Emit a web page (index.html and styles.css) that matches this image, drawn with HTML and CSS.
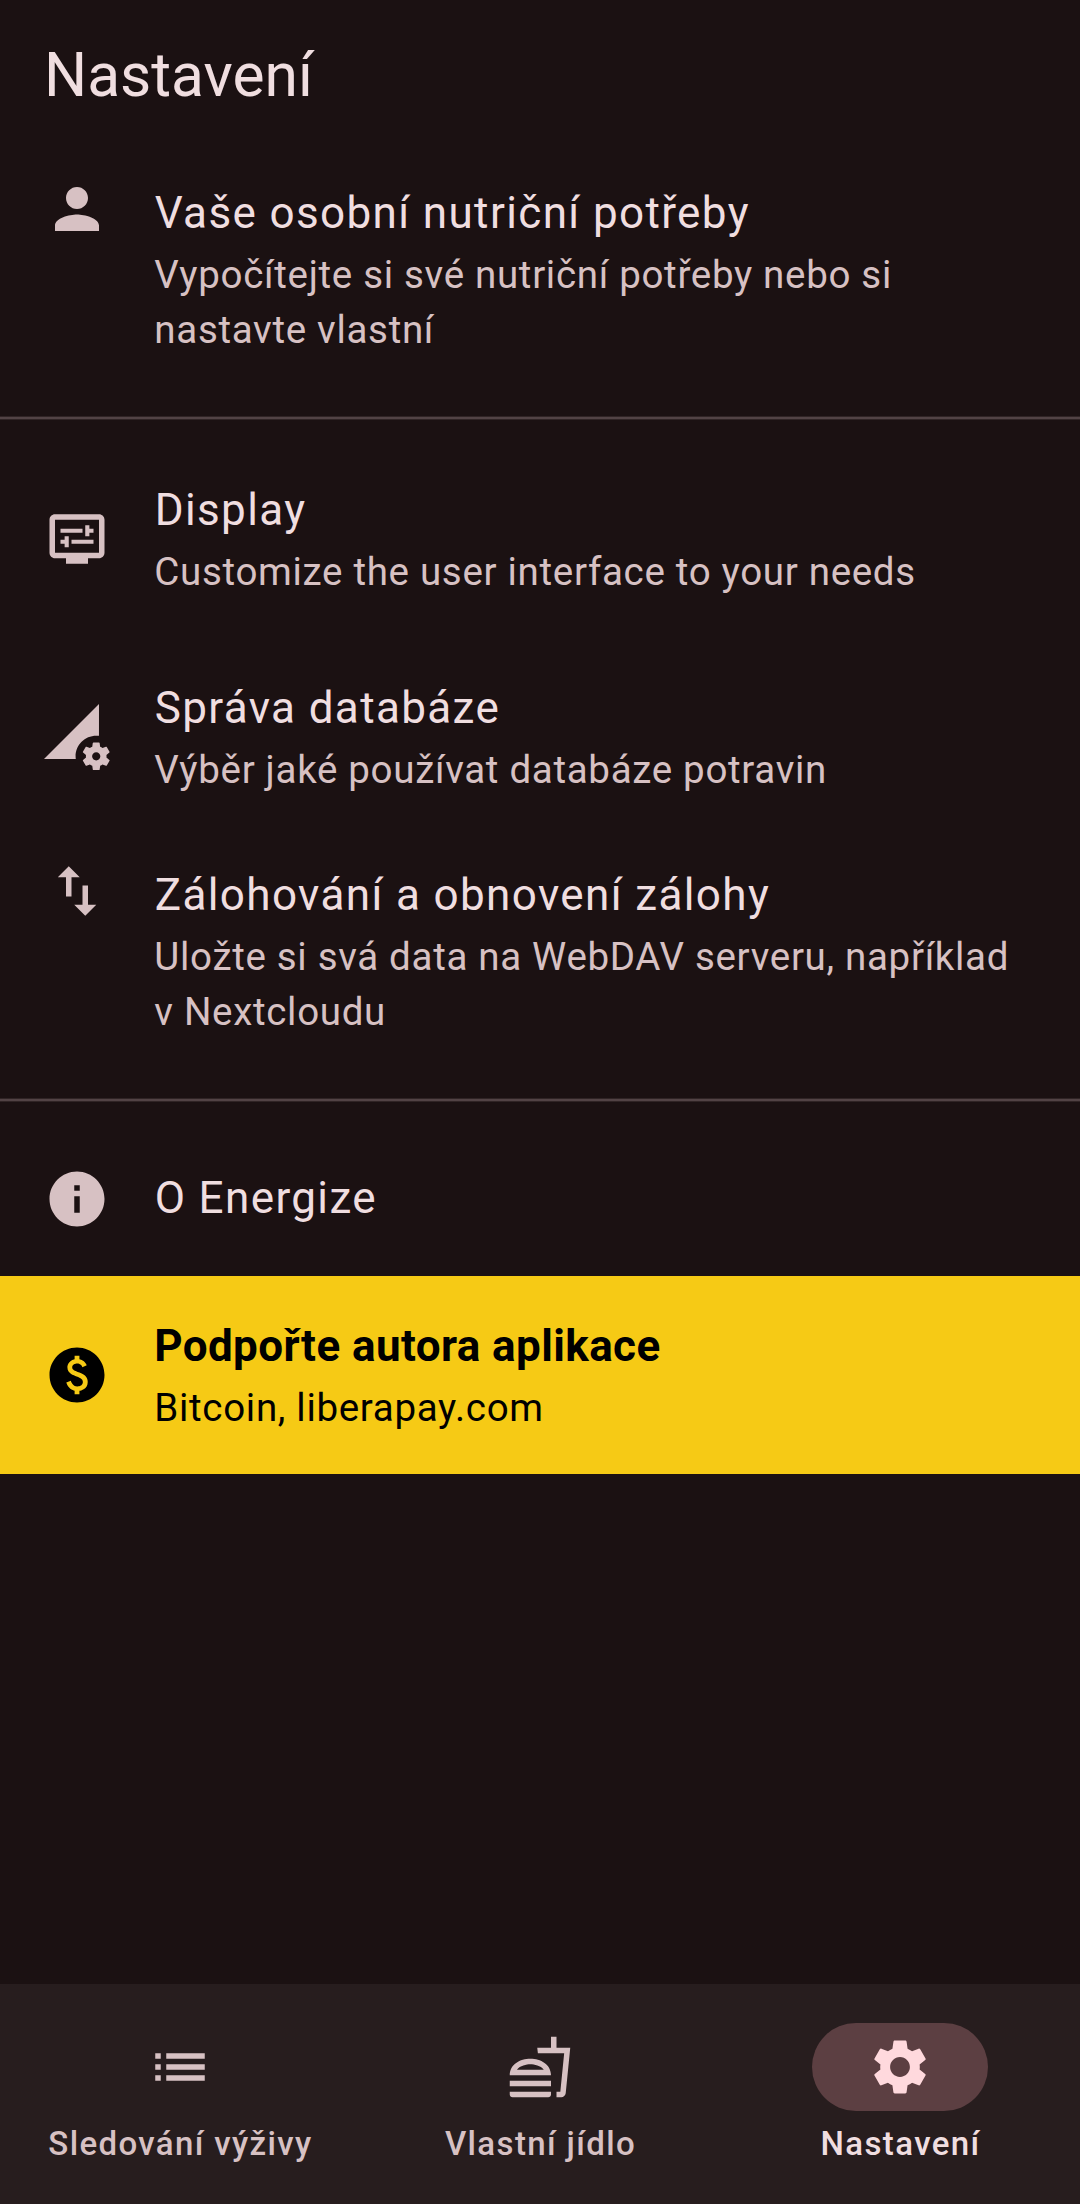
FILE: index.html
```html
<!DOCTYPE html>
<html lang="cs">
<head>
<meta charset="utf-8">
<title>Nastavení</title>
<link rel="stylesheet" href="styles.css">
</head>
<body>
<div class="app">
  <header class="app-bar"><h1>Nastavení</h1></header>
  <main class="settings">
    <div class="tile tile-tall">
      <svg class="icon" viewBox="0 0 24 24"><path d="M12 12c2.21 0 4-1.79 4-4s-1.79-4-4-4-4 1.79-4 4 1.79 4 4 4zm0 2c-2.67 0-8 1.34-8 4v2h16v-2c0-2.66-5.33-4-8-4z"/></svg>
      <div class="tile-text">
        <div class="tile-title">Vaše osobní nutriční potřeby</div>
        <div class="tile-subtitle">Vypočítejte si své nutriční potřeby nebo si nastavte vlastní</div>
      </div>
    </div>
    <div class="divider"></div>
    <div class="tile">
      <svg class="icon" viewBox="0 0 24 24"><path d="M20 3H4c-1.1 0-2 .9-2 2v12c0 1.1.9 2 2 2h4v2h8v-2h4c1.1 0 2-.9 2-2V5c0-1.1-.9-2-2-2zm0 14H4V5h16v12z"/><path d="M6 8.25h8v1.5H6zM16.5 9.75H18v-1.5h-1.5V7H15v4h1.5zM10 12.25h8v1.5h-8zM7.5 15H9v-4H7.5v1.25H6v1.5h1.5z"/></svg>
      <div class="tile-text">
        <div class="tile-title">Display</div>
        <div class="tile-subtitle">Customize the user interface to your needs</div>
      </div>
    </div>
    <div class="tile">
      <svg class="icon" viewBox="0 0 24 24"><path d="M18.99 11.5c.34 0 .67.03 1 .07L20 0 0 20h11.56c-.04-.33-.07-.66-.07-1 0-4.14 3.36-7.5 7.5-7.5zm3.71 7.99c.02-.16.04-.32.04-.49 0-.17-.01-.33-.04-.49l1.06-.83c.09-.08.12-.21.06-.32l-1-1.73c-.06-.11-.19-.15-.31-.11l-1.24.5c-.26-.2-.54-.37-.85-.49l-.19-1.32c-.01-.12-.12-.21-.24-.21h-2c-.12 0-.23.09-.25.21l-.19 1.32c-.3.13-.59.29-.85.49l-1.24-.5c-.11-.04-.24 0-.31.11l-1 1.73c-.06.11-.04.24.06.32l1.06.83c-.02.16-.03.32-.03.49 0 .17.01.33.03.49l-1.06.83c-.09.08-.12.21-.06.32l1 1.73c.06.11.19.15.31.11l1.24-.5c.26.2.54.37.85.49l.19 1.32c.02.12.12.21.25.21h2c.12 0 .23-.09.25-.21l.19-1.32c.3-.13.59-.29.84-.49l1.25.5c.11.04.24 0 .31-.11l1-1.73c.06-.11.03-.24-.06-.32l-1.07-.83zm-3.71 1.01c-.83 0-1.5-.67-1.5-1.5s.67-1.5 1.5-1.5 1.5.67 1.5 1.5-.67 1.5-1.5 1.5z"/></svg>
      <div class="tile-text">
        <div class="tile-title">Správa databáze</div>
        <div class="tile-subtitle">Výběr jaké používat databáze potravin</div>
      </div>
    </div>
    <div class="tile tile-tall">
      <svg class="icon" viewBox="0 0 24 24"><path d="M16 17.01V10h-2v7.01h-3L15 21l4-3.99h-3zM9 3L5 6.99h3V14h2V6.99h3L9 3z"/></svg>
      <div class="tile-text">
        <div class="tile-title">Zálohování a obnovení zálohy</div>
        <div class="tile-subtitle">Uložte si svá data na WebDAV serveru, například v&nbsp;Nextcloudu</div>
      </div>
    </div>
    <div class="divider"></div>
    <div class="tile tile-short">
      <svg class="icon" viewBox="0 0 24 24"><path d="M12 2C6.48 2 2 6.48 2 12s4.48 10 10 10 10-4.48 10-10S17.52 2 12 2zm1 15h-2v-6h2v6zm0-8h-2V7h2v2z"/></svg>
      <div class="tile-text">
        <div class="tile-title">O Energize</div>
      </div>
    </div>
    <div class="tile tile-support">
      <svg class="icon" viewBox="0 0 24 24"><path d="M12 2C6.48 2 2 6.48 2 12s4.48 10 10 10 10-4.48 10-10S17.52 2 12 2zm.88 15.76V19h-1.75v-1.29c-.74-.18-2.39-.77-3.02-2.96l1.65-.67c.06.22.58 2.09 2.4 2.09.93 0 1.98-.48 1.98-1.61 0-.96-.7-1.46-2.28-2.03-1.1-.39-3.35-1.03-3.35-3.31 0-.1.01-2.4 2.62-2.96V5h1.75v1.24c1.84.32 2.51 1.79 2.66 2.23l-1.58.67c-.11-.35-.59-1.34-1.9-1.34-.7 0-1.81.37-1.81 1.39 0 .95.86 1.31 2.64 1.9 2.4.83 3.01 2.05 3.01 3.45 0 2.63-2.5 3.13-3.02 3.22z"/></svg>
      <div class="tile-text">
        <div class="tile-title">Podpořte autora aplikace</div>
        <div class="tile-subtitle">Bitcoin, liberapay.com</div>
      </div>
    </div>
  </main>
  <nav class="nav-bar">
    <div class="nav-item">
      <div class="indicator"><svg class="icon" viewBox="0 0 24 24"><path d="M3 13h2v-2H3v2zm0 4h2v-2H3v2zm0-8h2V7H3v2zm4 4h14v-2H7v2zm0 4h14v-2H7v2zM7 7v2h14V7H7z"/></svg></div>
      <span>Sledování výživy</span>
    </div>
    <div class="nav-item">
      <div class="indicator"><svg class="icon" viewBox="0 0 24 24"><path d="M1 21.98c0 .56.45 1.01 1.01 1.01H15c.56 0 1.01-.45 1.01-1.01V21H1v.98zM8.5 8.99C4.75 8.99 1 11 1 15h15c0-4-3.75-6.01-7.5-6.01zM3.62 13c1.11-1.55 3.47-2.01 4.88-2.01s3.77.46 4.88 2.01H3.62zM1 17h15v2H1zM18 5V1h-2v4h-5l.23 2h9.56l-1.4 14H18v2h1.72c.84 0 1.53-.65 1.63-1.47L23 5h-5z"/></svg></div>
      <span>Vlastní jídlo</span>
    </div>
    <div class="nav-item nav-item-active">
      <div class="indicator"><svg class="icon" viewBox="0 0 24 24"><path d="M19.14 12.94c.04-.3.06-.61.06-.94 0-.32-.02-.64-.07-.94l2.03-1.58c.18-.14.23-.41.12-.61l-1.92-3.32c-.12-.22-.37-.29-.59-.22l-2.39.96c-.5-.38-1.03-.7-1.62-.94l-.36-2.54c-.04-.24-.24-.41-.48-.41h-3.84c-.24 0-.43.17-.47.41l-.36 2.54c-.59.24-1.13.57-1.62.94l-2.39-.96c-.22-.08-.47 0-.59.22L2.74 8.87c-.12.21-.08.47.12.61l2.03 1.58c-.05.3-.09.63-.09.94s.02.64.07.94l-2.03 1.58c-.18.14-.23.41-.12.61l1.92 3.32c.12.22.37.29.59.22l2.39-.96c.5.38 1.03.7 1.62.94l.36 2.54c.05.24.24.41.48.41h3.84c.24 0 .44-.17.47-.41l.36-2.54c.59-.24 1.13-.56 1.62-.94l2.39.96c.22.08.47 0 .59-.22l1.92-3.32c.12-.22.07-.47-.12-.61l-2.01-1.58zM12 15.6c-1.98 0-3.6-1.62-3.6-3.6s1.62-3.6 3.6-3.6 3.6 1.62 3.6 3.6-1.62 3.6-3.6 3.6z"/></svg></div>
      <span>Nastavení</span>
    </div>
  </nav>
</div>
</body>
</html>
```
FILE: styles.css
```css
*,
*::before {
  box-sizing: border-box;
}

body {
  margin: 0;
  background: #1b1112;
  color: #f0dee0;
  font-family: Roboto, sans-serif;
}

.app {
  display: flex;
  flex-direction: column;
  height: 2204px;
}

.app-bar {
  display: flex;
  align-items: center;
  height: 154px;
  padding: 0 44px 2px;
}

.app-bar h1 {
  margin: 0;
  font-size: 60.5px;
  font-weight: 400;
  line-height: 76px;
}

.settings {
  flex: 1;
}

.tile {
  display: flex;
  align-items: center;
  gap: 44px;
  height: 198px;
  padding: 0 66px 3px 44px;
}

.tile > .icon {
  margin-top: 3px;
}

.tile-tall {
  align-items: flex-start;
  height: 242px;
  padding-top: 22px;
}

.tile-tall > .icon {
  margin-top: 0;
}

.tile-tall .tile-text {
  padding-top: 4px;
}

.tile-short {
  height: 154px;
}

.icon {
  flex: none;
  width: 66px;
  height: 66px;
  fill: #d7c1c3;
}

.tile-text {
  flex: 1;
}

.tile-title {
  padding-left: 0.7px;
  font-size: 44px;
  line-height: 66px;
  letter-spacing: 1.375px;
}

.tile-subtitle {
  padding: 1px 0 0 0.35px;
  color: #d7c1c3;
  font-size: 38.5px;
  line-height: 55px;
  letter-spacing: 0.6875px;
}

.divider {
  display: flex;
  align-items: center;
  height: 44px;
}

.divider::before {
  content: "";
  flex: 1;
  height: 4px;
  border: solid #302425;
  border-width: 1px 0;
  background: #524345;
}

.tile-support {
  background: #f6ca15;
  color: #000;
}

.tile-support .tile-title {
  padding-left: 0.2px;
  font-weight: 700;
  letter-spacing: 0.41px;
}

.tile-support .tile-subtitle {
  color: #000;
}

.tile-support .icon {
  fill: #000;
}

.nav-bar {
  display: grid;
  grid-template-columns: repeat(3, 1fr);
  height: 220px;
  padding-top: 39px;
  background: #271d1e;
}

.nav-item {
  display: flex;
  flex-direction: column;
  align-items: center;
  gap: 11px;
  color: #d7c1c3;
  font-size: 33px;
  font-weight: 500;
  line-height: 44px;
  letter-spacing: 1.375px;
}

.nav-item span {
  padding-left: 1px;
}

.indicator {
  display: flex;
  align-items: center;
  justify-content: center;
  width: 176px;
  height: 88px;
  border-radius: 44px;
}

.nav-item-active {
  color: #f0dee0;
}

.nav-item-active .indicator {
  background: #5c3f42;
}

.nav-item-active .icon {
  fill: #ffd9dd;
}
```
